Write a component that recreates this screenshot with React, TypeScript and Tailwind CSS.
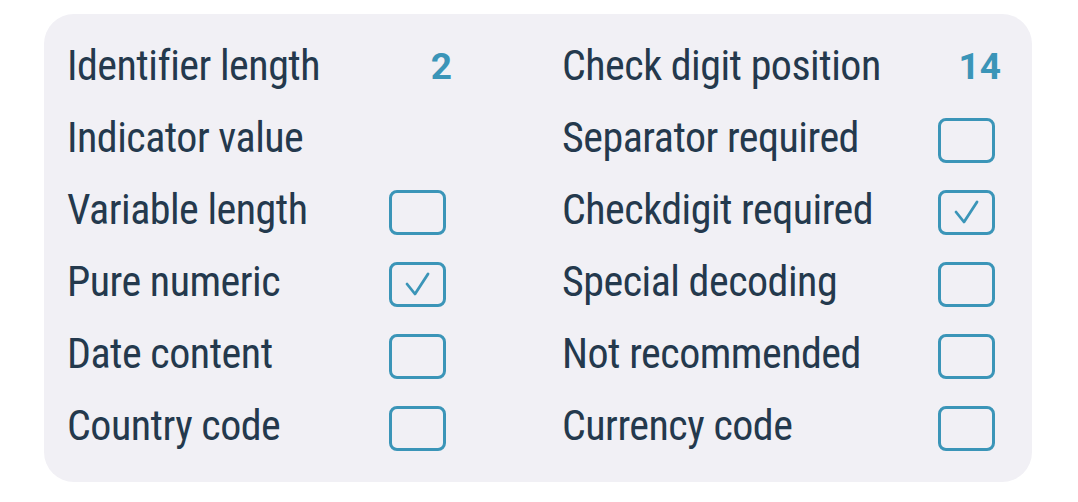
type Row = { label: string; value?: string; checked?: boolean; box?: boolean };

const left: Row[] = [
  { label: 'Identifier length', value: '2' },
  { label: 'Indicator value' },
  { label: 'Variable length', box: true },
  { label: 'Pure numeric', box: true, checked: true },
  { label: 'Date content', box: true },
  { label: 'Country code', box: true },
];

const right: Row[] = [
  { label: 'Check digit position', value: '14' },
  { label: 'Separator required', box: true },
  { label: 'Checkdigit required', box: true, checked: true },
  { label: 'Special decoding', box: true },
  { label: 'Not recommended', box: true },
  { label: 'Currency code', box: true },
];

const CheckBox = ({ checked }: { checked?: boolean }) => (
  <div className="mr-[5px] mt-[4px] flex h-[45px] w-[57px] items-center justify-center rounded-[8px] border-[3px] border-[#3b95b8]">
    {checked && (
      <svg width="25" height="24" viewBox="0 0 25 24" fill="none">
        <path d="M2 12 L10 22 L23 2" stroke="#3b95b8" strokeWidth="2.8" strokeLinecap="round" strokeLinejoin="round" />
      </svg>
    )}
  </div>
);

const Item = ({ row }: { row: Row }) => (
  <div className="flex h-[72px] items-center justify-between">
    <span className="font-['Roboto_Condensed','Liberation_Sans',sans-serif] text-[42px] leading-none font-normal tracking-[-0.5px] text-[#24394d]">
      {row.label}
    </span>
    {row.value && (
      <span className="-mr-[1px] font-['Roboto','Liberation_Sans',sans-serif] text-[37px] leading-none font-bold text-[#3b95b8]">
        {row.value}
      </span>
    )}
    {row.box && <CheckBox checked={row.checked} />}
  </div>
);

export default function App() {
  return (
    <div className="h-[502px] w-[1078px] bg-white pl-[44px] pt-[14px]">
      <div className="grid h-[468px] w-[988px] grid-cols-[384px_438px] gap-x-[111px] rounded-[30px] bg-[#f1f0f5] pl-[23px] pt-4">
        <div className="flex flex-col">
          {left.map((r) => (
            <Item key={r.label} row={r} />
          ))}
        </div>
        <div className="flex flex-col">
          {right.map((r) => (
            <Item key={r.label} row={r} />
          ))}
        </div>
      </div>
    </div>
  );
}
